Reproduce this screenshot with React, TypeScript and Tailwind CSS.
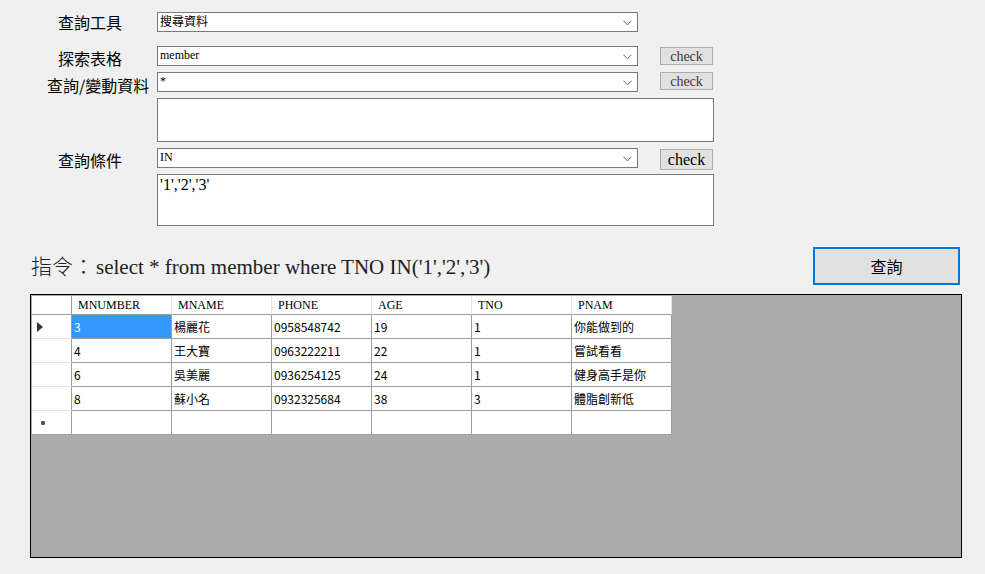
import React from "react";

const cjk = { fontFamily: '"Noto Sans CJK TC", "Noto Sans", sans-serif' };
const serif = { fontFamily: '"Liberation Serif", "Noto Sans CJK TC", serif' };

type Member = {
  mnumber: string;
  mname: string;
  phone: string;
  age: string;
  tno: string;
  pnam: string;
};

const rows: Member[] = [
  { mnumber: "3", mname: "楊麗花", phone: "0958548742", age: "19", tno: "1", pnam: "你能做到的" },
  { mnumber: "4", mname: "王大寶", phone: "0963222211", age: "22", tno: "1", pnam: "嘗試看看" },
  { mnumber: "6", mname: "吳美麗", phone: "0936254125", age: "24", tno: "1", pnam: "健身高手是你" },
  { mnumber: "8", mname: "蘇小名", phone: "0932325684", age: "38", tno: "3", pnam: "體脂創新低" },
];

const columns = ["MNUMBER", "MNAME", "PHONE", "AGE", "TNO", "PNAM"];

function Combo({ value, latin }: { value: string; latin?: boolean }) {
  return (
    <div className="w-[481px] h-[20px] bg-white border border-[#7a7a7a] flex items-center justify-between pl-[2px] pr-[5px]">
      <span
        className="text-[12px] leading-[14px] text-black -mt-[3px]"
        style={latin ? serif : cjk}
      >
        {value}
      </span>
      <svg width="9" height="6" viewBox="0 0 9 6" className="mt-[1px]">
        <path d="M0.5 0.8 L4.5 4.8 L8.5 0.8" fill="none" stroke="#606060" strokeWidth="1" />
      </svg>
    </div>
  );
}

function CheckButton({ big }: { big?: boolean }) {
  return (
    <button
      className={
        "ml-[22px] w-[53px] bg-[#e1e1e1] border border-[#adadad] flex items-center justify-center " +
        (big ? "h-[21px] text-[16px] mt-[2px] text-black" : "h-[18px] text-[14px] text-[#3a3a3a]")
      }
      style={serif}
    >
      check
    </button>
  );
}

function Label({ text, pl }: { text: string; pl: string }) {
  return (
    <div className={"w-[157px] text-[16px] leading-[20px] text-black " + pl} style={cjk}>
      {text}
    </div>
  );
}

export default function App() {
  return (
    <div className="w-[985px] h-[574px] bg-[#f0f0f0] overflow-hidden flex flex-col pt-[12px]">
      {/* 查詢工具 */}
      <div className="flex items-center h-[20px]">
        <Label text="查詢工具" pl="pl-[58px]" />
        <Combo value="搜尋資料" />
      </div>

      {/* 探索表格 */}
      <div className="flex items-start h-[20px] mt-[14px]">
        <Label text="探索表格" pl="pl-[58px] pt-[2px]" />
        <Combo value="member" latin />
        <div className="mt-[1px]">
          <CheckButton />
        </div>
      </div>

      {/* 查詢/變動資料 */}
      <div className="flex items-start h-[20px] mt-[6px]">
        <Label text="查詢/變動資料" pl="pl-[47px] pt-[3px]" />
        <Combo value="*" latin />
        <CheckButton />
      </div>

      <div className="ml-[157px] mt-[6px] w-[557px] h-[44px] bg-white border border-[#7a7a7a]" />

      {/* 查詢條件 */}
      <div className="flex items-start h-[20px] mt-[6px]">
        <Label text="查詢條件" pl="pl-[58px] pt-[2px]" />
        <Combo value="IN" latin />
        <div className="-mt-[1px]">
          <CheckButton big />
        </div>
      </div>

      <div
        className="ml-[157px] mt-[6px] w-[557px] h-[52px] bg-white border border-[#7a7a7a] px-[2px] text-[16px] leading-[20px] text-black"
        style={serif}
      >
        '1','2','3'
      </div>

      {/* 指令 */}
      <div className="flex items-center justify-between mt-[21px] h-[38px] pl-[31px] pr-[25px]">
        <div className="text-[21px] text-[#222] flex items-baseline pt-[1px]">
          <span className="w-[65px] font-light" style={cjk}>指令：</span>
          <span style={serif}>select * from member where TNO IN('1','2','3')</span>
        </div>
        <button
          className="w-[147px] h-[38px] bg-[#e1e1e1] border-2 border-[#0078d7] text-[16px] text-black"
          style={cjk}
        >
          查詢
        </button>
      </div>

      {/* data grid */}
      <div className="ml-[30px] mt-[9px] w-[932px] h-[264px] border border-black bg-[#ababab] p-[1px]">
        <div className="grid grid-cols-[40px_repeat(6,100px)] w-[640px] bg-white">
          <div className="h-[19px] border-r border-[#a0a0a0] border-b border-b-[#a0a0a0]" />
          {columns.map((c) => (
            <div
              key={c}
              className="h-[19px] border-r border-[#e4e4e4] border-b border-b-[#a0a0a0] pl-[6px] text-[12px] leading-[18px] text-black"
              style={serif}
            >
              {c}
            </div>
          ))}

          {rows.map((r, i) => {
            const cells = [r.mnumber, r.mname, r.phone, r.age, r.tno, r.pnam];
            return (
              <React.Fragment key={r.mnumber}>
                <div className="h-[24px] border-r border-[#a0a0a0] border-b border-b-[#e4e4e4] flex items-center pl-[5px]">
                  {i === 0 && (
                    <svg width="6" height="10" viewBox="0 0 6 10">
                      <polygon points="0,0 6,5 0,10" fill="#333" />
                    </svg>
                  )}
                </div>
                {cells.map((v, j) => (
                  <div
                    key={j}
                    className={
                      "h-[24px] border-r border-b border-[#a0a0a0] pl-[2px] text-[12px] leading-[23px] " +
                      (i === 0 && j === 0 ? "bg-[#3399ff] text-white" : "text-black")
                    }
                    style={cjk}
                  >
                    {v}
                  </div>
                ))}
              </React.Fragment>
            );
          })}

          <div className="h-[24px] border-r border-[#a0a0a0] border-b border-b-[#a0a0a0] flex items-center pl-[9px]">
            <div className="w-[4px] h-[4px] rounded-[1px] bg-[#555]" />
          </div>
          {columns.map((c) => (
            <div key={c} className="h-[24px] border-r border-b border-[#a0a0a0]" />
          ))}
        </div>
      </div>
    </div>
  );
}
